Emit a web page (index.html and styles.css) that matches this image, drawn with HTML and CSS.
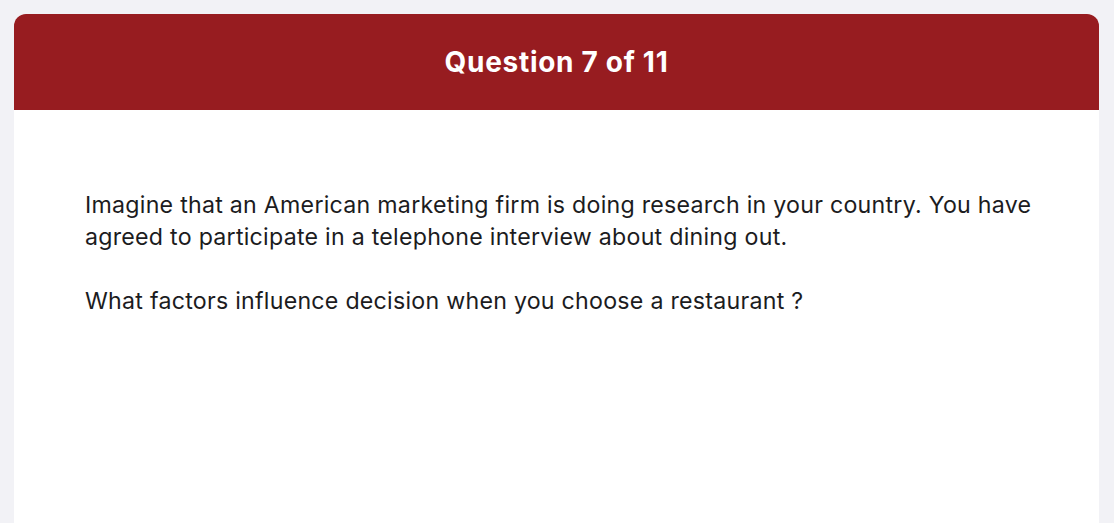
FILE: index.html
```html
<!DOCTYPE html>
<html lang="en">
<head>
<meta charset="utf-8">
<title>Question 7 of 11</title>
<link rel="stylesheet" href="styles.css">
</head>
<body>
<main class="card">
  <header class="card-header">
    <h1 class="card-title">Question 7 of 11</h1>
  </header>
  <section class="card-body">
    <p class="prompt">Imagine that an American marketing firm is doing research in your country. You have agreed to participate in a telephone interview about dining out.</p>
    <p class="prompt">What factors influence decision when you choose a restaurant ?</p>
  </section>
</main>
</body>
</html>
```
FILE: styles.css
```css
html, body {
  margin: 0;
  padding: 0;
  height: 100%;
  overflow: hidden;
}
body {
  background: #f2f2f6;
  font-family: Inter, "Noto Sans", sans-serif;
  color: #1c1c1e;
  padding: 14px 15px 0 14px;
  box-sizing: border-box;
}
.card {
  background: #ffffff;
  border-radius: 12px 12px 0 0;
  min-height: 600px;
  overflow: hidden;
}
.card-header {
  background: #971c20;
  height: 96px;
  display: flex;
  align-items: center;
  justify-content: center;
}
.card-title {
  margin: 0;
  color: #ffffff;
  font-size: 28px;
  font-weight: 700;
  letter-spacing: 0.7px;
}
.card-body {
  padding: 79px 50px 0 71px;
}
.prompt {
  margin: 0 0 32px 0;
  font-size: 23.2px;
  line-height: 32px;
  letter-spacing: 0.25px;
}
```
